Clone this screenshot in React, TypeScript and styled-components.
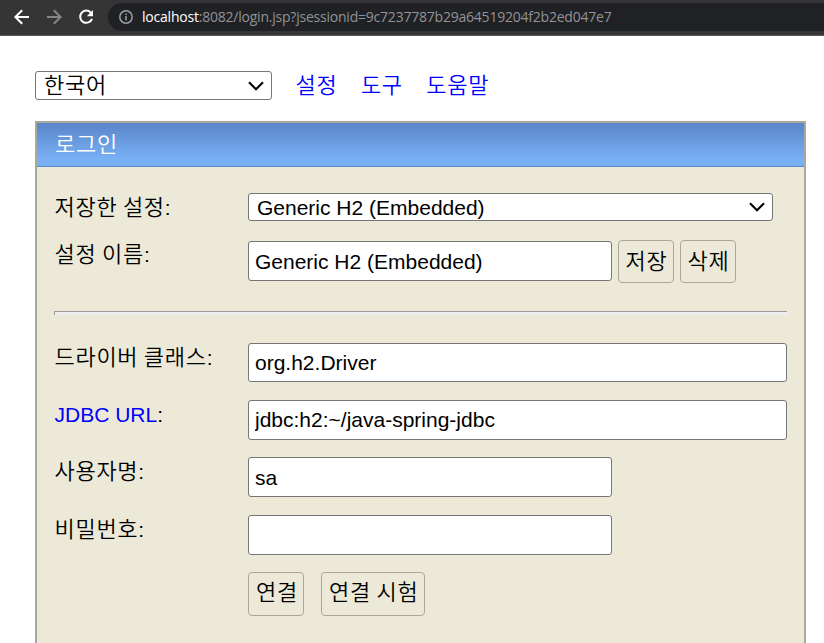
import React from "react";
import styled, { createGlobalStyle } from "styled-components";

const GlobalStyle = createGlobalStyle`
  * { box-sizing: border-box; }
  html, body, #root { height: 100%; }
  body {
    margin: 0;
    overflow: hidden;
    background: #fff;
    color: #000;
    font: 21px/28px "Liberation Sans", "Noto Sans CJK KR", sans-serif;
  }
`;

const Page = styled.div`
  display: flex;
  flex-direction: column;
  height: 643px;
`;

const BrowserBar = styled.header`
  display: flex;
  flex: none;
  height: 36px;
  padding: 3px 0 0 14px;
  background: #353535;
  border-bottom: 1px solid #595959;
`;

const NavIcon = styled.svg<{ $dim?: boolean }>`
  width: 16px;
  height: 16px;
  margin: 6px 16px 0 0;
  fill: none;
  stroke: ${(p) => (p.$dim ? "#858585" : "#fff")};
  stroke-width: 2;
`;

const AddressBar = styled.div`
  display: flex;
  flex: 1;
  height: 28px;
  margin-left: -2px;
  padding-left: 11px;
  border-radius: 14px 0 0 14px;
  background: #202124;
`;

const InfoIcon = styled.svg`
  width: 14px;
  height: 14px;
  margin: 7px 9px 0 0;
  fill: none;
  stroke: #9aa0a6;
  stroke-width: 1.5;
`;

const Url = styled.span`
  color: #919396;
  font: 14px/27px "Open Sans", "Noto Sans", sans-serif;
  letter-spacing: -0.22px;
  white-space: nowrap;
`;

const Host = styled.span`
  color: #fff;
`;

const Hangul = styled.span`
  font-family: "Noto Sans CJK KR", sans-serif;
  font-size: 22px;
  font-weight: 350;
  letter-spacing: 0.7px;
  white-space: nowrap;
`;

const TopMenu = styled.nav`
  display: flex;
  flex: none;
  height: 29px;
  margin: 35px 0 0 35px;
`;

const SelectBox = styled.div<{ $width: number; $height: number; $lineHeight: number }>`
  display: flex;
  align-items: flex-start;
  justify-content: space-between;
  width: ${(p) => p.$width}px;
  height: ${(p) => p.$height}px;
  padding: 0 7px 0 8px;
  border: 1px solid #767676;
  border-radius: 3px;
  background: #fff;
  line-height: ${(p) => p.$lineHeight}px;
`;

const Chevron = styled.svg`
  align-self: center;
  width: 16px;
  height: 10px;
  fill: none;
  stroke: #000;
  stroke-width: 2.1;
`;

const MenuLink = styled.a`
  margin-left: 23.5px;
  color: #00f;
  line-height: 24px;
`;

const Panel = styled.main`
  flex: 1;
  width: 771px;
  margin: 21px 0 0 35px;
  border: 2px solid #aca899;
  border-bottom: 0;
  background: #ece9d8;
`;

const PanelTitle = styled.h1`
  height: 44px;
  margin: 0;
  padding: 5px 0 0 18px;
  border-bottom: 1px solid #5a8bce;
  background: linear-gradient(#5a85ca 0%, #79b0f4 85%);
  color: #fff;
  font-size: inherit;
  font-weight: normal;
`;

const FormBody = styled.form`
  padding: 26px 17px 0;
`;

const Row = styled.div<{ $gap?: number }>`
  display: flex;
  align-items: flex-start;
  margin-top: ${(p) => p.$gap ?? 0}px;
`;

const Label = styled.label<{ $lineHeight?: number }>`
  flex: none;
  width: 194px;
  height: 28px;
  padding-left: 0.5px;
  line-height: ${(p) => p.$lineHeight ?? 24}px;
`;

const LabelLink = styled.a`
  color: #00f;
`;

const TextInput = styled.input<{ $width: number; $height?: number; $inset?: number }>`
  width: ${(p) => p.$width}px;
  height: ${(p) => p.$height ?? 40}px;
  padding: ${(p) => p.$inset ?? 2}px 6px 0;
  border: 1px solid #767676;
  border-radius: 3px;
  outline: 0;
  background: #fff;
  color: #000;
  font: 21px "Liberation Sans", sans-serif;
`;

const Button = styled.button<{ $width: number; $height: number; $gap?: number }>`
  width: ${(p) => p.$width}px;
  height: ${(p) => p.$height}px;
  margin-left: ${(p) => p.$gap ?? 0}px;
  padding: 0 0 2px 7px;
  border: 1px solid #aca899;
  border-radius: 4px;
  background: #ece9d8;
  color: #000;
  line-height: 28px;
  text-align: left;
`;

const SaveButton = styled(Button)`
  margin-top: -1px;
  padding: 0 0 0 6.5px;
`;

const Divider = styled.hr`
  height: 4px;
  margin: 28px 0;
  border: 0;
  border-top: 1px solid #9a9a9a;
  border-left: 1px solid #9a9a9a;
  background: #eee;
`;

const DropArrow = () => (
  <Chevron viewBox="0 0 16 10">
    <path d="M1 1.3 8 8.2 15 1.3" />
  </Chevron>
);

export default function App() {
  return (
    <>
      <GlobalStyle />
      <Page>
        <BrowserBar>
          <NavIcon viewBox="0 0 16 16">
            <path d="M15 8H2M8.2 1.2 1.4 8l6.8 6.8" />
          </NavIcon>
          <NavIcon viewBox="0 0 16 16" $dim>
            <path d="M1 8h13M7.8 1.2 14.6 8l-6.8 6.8" />
          </NavIcon>
          <NavIcon viewBox="0 0 16 16">
            <path d="M12.8 3.6A6.1 6.1 0 1 0 14 9.8" />
            <path d="M15 1v6.2H8.8z" fill="#fff" stroke="none" />
          </NavIcon>
          <AddressBar>
            <InfoIcon viewBox="0 0 14 14">
              <circle cx="7" cy="7" r="6.2" />
              <path d="M7 6.1v4.4M7 3.4v1.5" />
            </InfoIcon>
            <Url>
              <Host>localhost</Host>:8082/login.jsp?jsessionid=9c7237787b29a64519204f2b2ed047e7
            </Url>
          </AddressBar>
        </BrowserBar>
        <TopMenu>
          <SelectBox $width={237} $height={29} $lineHeight={23}>
            <Hangul>한국어</Hangul>
            <DropArrow />
          </SelectBox>
          <MenuLink><Hangul>설정</Hangul></MenuLink>
          <MenuLink><Hangul>도구</Hangul></MenuLink>
          <MenuLink><Hangul>도움말</Hangul></MenuLink>
        </TopMenu>
        <Panel>
          <PanelTitle><Hangul>로그인</Hangul></PanelTitle>
          <FormBody>
            <Row>
              <Label><Hangul>저장한 설정</Hangul>:</Label>
              <SelectBox $width={525} $height={28} $lineHeight={28}>
                Generic H2 (Embedded)
                <DropArrow />
              </SelectBox>
            </Row>
            <Row $gap={20}>
              <Label $lineHeight={22}><Hangul>설정 이름</Hangul>:</Label>
              <TextInput $width={364} $height={40} defaultValue="Generic H2 (Embedded)" />
              <SaveButton type="button" $width={56} $height={43} $gap={6}><Hangul>저장</Hangul></SaveButton>
              <SaveButton type="button" $width={56} $height={43} $gap={6}><Hangul>삭제</Hangul></SaveButton>
            </Row>
            <Divider />
            <Row>
              <Label><Hangul>드라이버 클래스</Hangul>:</Label>
              <TextInput $width={539} $height={39} $inset={1} defaultValue="org.h2.Driver" />
            </Row>
            <Row $gap={18}>
              <Label $lineHeight={30}><LabelLink>JDBC URL</LabelLink>:</Label>
              <TextInput $width={539} $inset={0} defaultValue="jdbc:h2:~/java-spring-jdbc" />
            </Row>
            <Row $gap={17}>
              <Label><Hangul>사용자명</Hangul>:</Label>
              <TextInput $width={364} defaultValue="sa" />
            </Row>
            <Row $gap={18}>
              <Label><Hangul>비밀번호</Hangul>:</Label>
              <TextInput $width={364} type="password" />
            </Row>
            <Row $gap={17}>
              <Label />
              <Button type="button" $width={56} $height={44}><Hangul>연결</Hangul></Button>
              <Button type="button" $width={104} $height={44} $gap={17}><Hangul>연결 시험</Hangul></Button>
            </Row>
          </FormBody>
        </Panel>
      </Page>
    </>
  );
}
